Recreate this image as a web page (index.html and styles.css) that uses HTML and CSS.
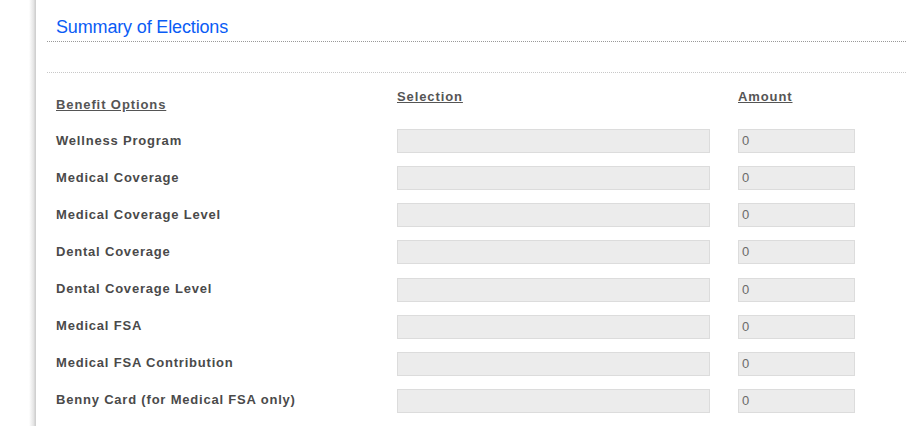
FILE: index.html
```html
<!DOCTYPE html>
<html>
<head>
<meta charset="utf-8">
<link rel="stylesheet" href="styles.css">
</head>
<body>
<div class="page">
  <div class="gutter"></div>
  <main class="panel">
    <h2 class="title">Summary of Elections</h2>
    <div class="rule-dark"></div>
    <div class="rule-light"></div>
    <div class="table">
      <div class="head head-label">Benefit Options</div>
      <div class="head">Selection</div>
      <div class="head">Amount</div>

      <div class="label">Wellness Program</div>
      <div class="box sel"></div>
      <div class="box amt">0</div>

      <div class="label">Medical Coverage</div>
      <div class="box sel"></div>
      <div class="box amt">0</div>

      <div class="label">Medical Coverage Level</div>
      <div class="box sel"></div>
      <div class="box amt">0</div>

      <div class="label">Dental Coverage</div>
      <div class="box sel"></div>
      <div class="box amt">0</div>

      <div class="label">Dental Coverage Level</div>
      <div class="box sel"></div>
      <div class="box amt">0</div>

      <div class="label">Medical FSA</div>
      <div class="box sel"></div>
      <div class="box amt">0</div>

      <div class="label">Medical FSA Contribution</div>
      <div class="box sel"></div>
      <div class="box amt">0</div>

      <div class="label">Benny Card (for Medical FSA only)</div>
      <div class="box sel"></div>
      <div class="box amt">0</div>
    </div>
  </main>
</div>
</body>
</html>
```

FILE: styles.css
```css
html, body {
  margin: 0;
  padding: 0;
  background: #fff;
  overflow: hidden;
}
.page {
  display: flex;
  width: 906px;
  height: 426px;
  font-family: "Liberation Sans", Arial, sans-serif;
}
.gutter {
  width: 36px;
  flex: none;
  background: linear-gradient(to right, #fff 0, #fff 29px, #e2e2e2 34px, #d0d0d0 35px, #d0d0d0 36px);
}
.panel {
  flex: 1;
  padding-left: 11px;
}
.title {
  margin: 0;
  padding: 17px 0 0 9px;
  height: 23px;
  font-size: 18px;
  font-weight: normal;
  color: #0a5cf5;
  line-height: 21px;
  letter-spacing: -0.15px;
}
.rule-dark {
  border-top: 1px dotted #999;
  margin-top: 1px;
}
.rule-light {
  border-top: 1px dotted #c8c8c8;
  margin-top: 30px;
}
.table {
  display: grid;
  grid-template-columns: 341px 341px 1fr;
  grid-template-rows: 27px;
  grid-auto-rows: 24px;
  row-gap: 13.11px;
  padding: 16px 0 0 9px;
}
.head {
  font-size: 13px;
  font-weight: bold;
  color: #555;
  text-decoration: underline;
  line-height: 15px;
  align-self: start;
  letter-spacing: 0.9px;
}
.head-label {
  padding-top: 8px;
}
.label {
  font-size: 13px;
  font-weight: bold;
  color: #4a4a4a;
  letter-spacing: 0.8px;
  line-height: 24px;
  align-self: center;
  margin-top: -1px;
}
.box {
  box-sizing: border-box;
  height: 24px;
  background: #ececec;
  border: 1px solid #dcdcdc;
}
.sel {
  width: 313px;
}
.amt {
  width: 117px;
  font-size: 13px;
  color: #6a6a6a;
  line-height: 22px;
  padding-left: 3px;
}
```
